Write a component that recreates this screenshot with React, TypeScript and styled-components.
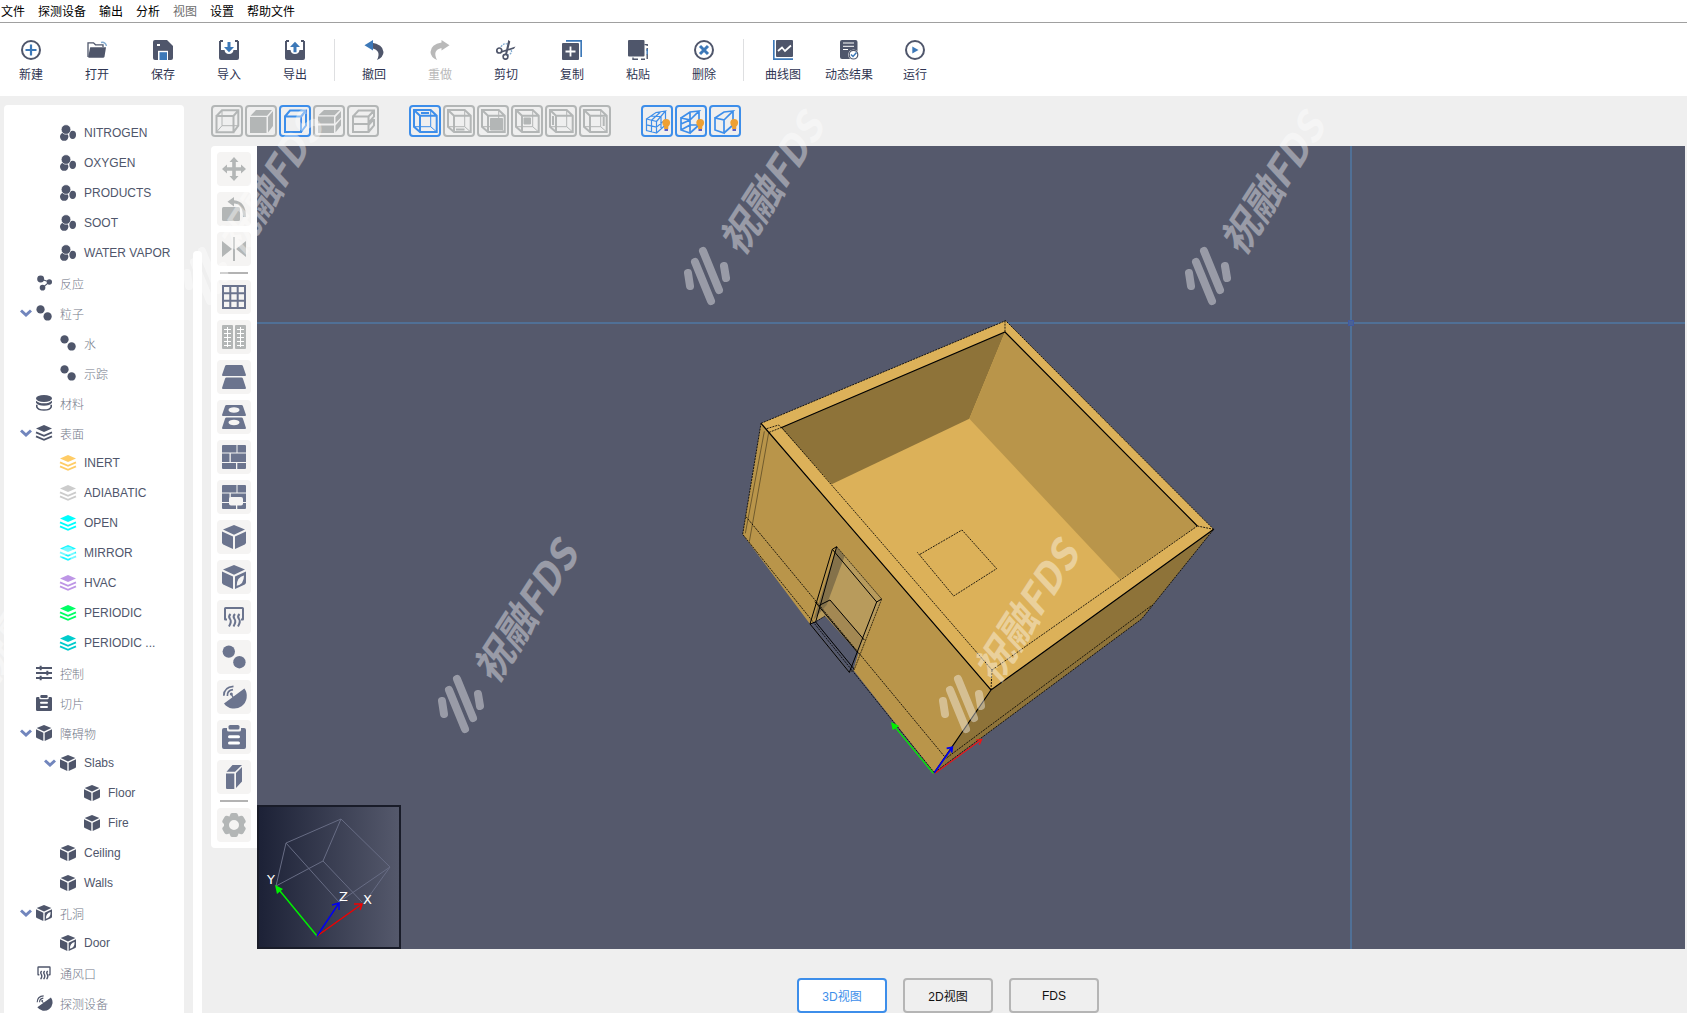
import React, { useState } from "react";
import styled, { createGlobalStyle, css } from "styled-components";

const SANS = `"Liberation Sans", "Noto Sans CJK SC", sans-serif`;
const INK = "#4f566b";
const BLUE = "#3c78b8";
const ACCENT = "#3d8eea";
const MUTED = "#b3b6b6";
const VIEW_BG = "#55596c";

const GlobalStyle = createGlobalStyle`
  * { box-sizing: border-box; }
  body { margin: 0; background: #efefef; font-family: ${SANS}; font-size: 12px; }
  button { margin: 0; padding: 0; border: 0; background: none; font: inherit; color: inherit; cursor: pointer; }
  button:disabled { cursor: default; }
  ul { margin: 0; padding: 0; list-style: none; }
  svg { display: block; flex: none; }
`;

const Page = styled.div`
  position: relative;
  display: flex;
  flex-direction: column;
  height: 100vh;
  overflow: hidden;
`;

const MenuBar = styled.nav`
  display: flex;
  gap: 13px;
  height: 23px;
  padding: 2px 0 0 1px;
  background: #fff;
  border-bottom: 1px solid #a0a0a0;
`;

const MenuItem = styled.button`
  color: #000;
  line-height: 20px;
  &:disabled { color: #6d6d6d; }
`;

const Toolbar = styled.header`
  display: flex;
  align-items: center;
  gap: 12px;
  height: 73px;
  padding-left: 4px;
  background: #fff;
`;

const ToolbarButton = styled.button`
  display: flex;
  flex-direction: column;
  align-items: center;
  gap: 6px;
  width: 54px;
  padding-top: 5px;
  color: #2f3552;
  line-height: 18px;
  white-space: nowrap;
  &:disabled { color: #b9b9b9; }
`;

const ToolbarRule = styled.span`
  width: 1px;
  height: 42px;
  background: #dedfe1;
`;

const Body = styled.div`
  display: flex;
  flex: 1;
  min-height: 0;
  padding: 9px 2px 0 4px;
`;

const TreePanel = styled.aside`
  width: 180px;
  padding-top: 13px;
  overflow: hidden;
  background: #fff;
  border-radius: 4px 4px 0 0;
`;

const TreeRow = styled.button<{ $level: number; $category: boolean }>`
  display: flex;
  align-items: center;
  width: 100%;
  height: 30px;
  padding-left: ${(p) => 16 + p.$level * 24}px;
  color: ${INK};
  white-space: nowrap;
  ${(p) => p.$category && css`color: #737989; font-weight: 300;`}
`;

const Twisty = styled.span`
  width: 16px;
  color: #7286bd;
`;

const TreeIcon = styled.span<{ $color: string }>`
  width: 24px;
  color: ${(p) => p.$color};
`;

const ScrollTrack = styled.div`
  width: 9px;
  margin: 146px 9px 0;
  background: #fff;
  border-radius: 4px 4px 0 0;
`;

const Main = styled.main`
  display: flex;
  flex: 1;
  flex-direction: column;
  min-width: 0;
`;

const ViewBar = styled.div`
  display: flex;
  gap: 30px;
  margin-bottom: 9px;
`;

const ViewGroup = styled.div`
  display: flex;
  gap: 2px;
`;

const ViewButton = styled.button<{ $active: boolean }>`
  display: grid;
  place-items: center;
  width: 32px;
  height: 32px;
  border: 2px solid ${(p) => (p.$active ? ACCENT : MUTED)};
  border-radius: 4px;
  color: ${(p) => (p.$active ? ACCENT : MUTED)};
`;

const Workspace = styled.div`
  display: flex;
  flex: 1;
  align-items: flex-start;
  min-height: 0;
`;

const ToolRail = styled.div`
  display: flex;
  flex-direction: column;
  align-items: center;
  gap: 6px;
  width: 46px;
  padding: 6px 0;
  background: #fff;
  border-radius: 4px 0 0 4px;
`;

const RailButton = styled.button`
  display: grid;
  place-items: center;
  width: 34px;
  height: 34px;
  border-radius: 4px;
  background: #f5f4f3;
  color: #6b748e;
  &:disabled { color: ${MUTED}; }
`;

const RailRule = styled.span`
  width: 28px;
  height: 2px;
  background: #b3b3b3;
`;

const Viewport = styled.section`
  position: relative;
  flex: 1;
  align-self: stretch;
  overflow: hidden;
  background: ${VIEW_BG};
`;

const NavCube = styled.div`
  position: absolute;
  left: 0;
  bottom: 0;
`;

const ModeBar = styled.footer`
  display: flex;
  justify-content: center;
  gap: 16px;
  padding-top: 29px;
`;

const ModeButton = styled.button<{ $active: boolean }>`
  width: 90px;
  height: 35px;
  border: 2px solid ${(p) => (p.$active ? ACCENT : "#b5b5b5")};
  border-radius: 4px;
  color: #111;
  ${(p) => p.$active && css`background: #fff; color: ${ACCENT};`}
`;

const WatermarkLayer = styled.div`
  position: absolute;
  inset: 0;
  overflow: hidden;
  pointer-events: none;
`;

/* ---------- icons, all on a 24 unit grid ---------- */

const cubeFaces = (
  <>
    <path d="M12 0 23 4.6 12 9.8 1 4.6Z" />
    <path d="M0 6.4 11 11.6V24L1.2 19.4Q0 18.8 0 17.5Z" />
  </>
);

const glyphs: Record<string, React.ReactNode> = {
  species: (
    <>
      <ellipse cx="6.3" cy="17.6" rx="6.3" ry="6.2" />
      <ellipse cx="19" cy="14.8" rx="5" ry="6.2" />
      <circle cx="9" cy="6.8" r="7.2" stroke="#fff" strokeWidth="1" />
    </>
  ),
  reaction: (
    <>
      <path d="M7 6 20 10.5 10 19" fill="none" stroke="currentColor" strokeWidth="1.6" />
      <circle cx="7" cy="6" r="5.2" /><circle cx="20" cy="10.5" r="4" /><circle cx="9.8" cy="19" r="4.2" />
    </>
  ),
  particle: <><circle cx="6.8" cy="6.6" r="6.2" /><circle cx="17.4" cy="17.2" r="6.2" /></>,
  material: (
    <>
      <ellipse cx="12" cy="5.2" rx="12" ry="5.2" />
      <path d="M0 8.6Q4 12.4 12 12.4T24 8.6V11.5Q21 16 12 16T0 11.5Z" />
      <path d="M1.2 14.5V18Q3 22.6 12 22.6T22.8 18V14.5" fill="none" stroke="currentColor" strokeWidth="2.4" />
    </>
  ),
  layers: (
    <>
      <path d="M12 0 24 5.2 12 10.4 0 5.2Z" />
      <path d="M0 11 12 16.2 24 11M0 17 12 22.2 24 17" fill="none" stroke="currentColor" strokeWidth="2.6" />
    </>
  ),
  control: (
    <path d="M0 4.5H24M0 12H24M0 19.5H24M7 1V8M17 8.5V15.5M7 16V23" fill="none" stroke="currentColor" strokeWidth="3" />
  ),
  clip: (
    <>
      <path d="M2 3H5V5Q5 6.5 7 6.5H17Q19 6.5 19 5V3H22Q24 3 24 5V22Q24 24 22 24H2Q0 24 0 22V5Q0 3 2 3Z" />
      <rect x="6.5" y="0" width="11" height="4.6" rx="1.6" />
      <path d="M7.5 11.8H16.5M7.5 18H16.5" stroke="#fff" strokeWidth="3" strokeLinecap="round" />
    </>
  ),
  cube: <>{cubeFaces}<path d="M13 11.6 24 6.4V17.5Q24 18.8 22.8 19.4L13 24Z" /></>,
  hole: (
    <>
      {cubeFaces}
      <path fillRule="evenodd" d="M13 11.6 24 6.4V17.5Q24 18.8 22.8 19.4L13 24ZM22 10.6Q15 12 14.7 20.8Q22 19.5 22 10.6Z" />
    </>
  ),
  vent: (
    <path d="M5 14.6H3.2Q3 14.6 3 14.2V3.6Q3 3 3.6 3H20.4Q21 3 21 3.6V14.2Q21 14.6 20.8 14.6H19M8.5 9Q6 11.5 8 14T7 21.4M13 9Q10.5 11.5 12.5 14T11.5 21.4M17.5 9Q15 11.5 17 14T16 21.4" fill="none" stroke="currentColor" strokeWidth="2" />
  ),
  dish: (
    <>
      <path d="M22.4 3.6A12 12 0 0 1 2 18.4Z" />
      <path d="M11.5 13 9.5 9.5" fill="none" stroke="currentColor" strokeWidth="1.5" />
      <circle cx="9.3" cy="9" r="1.5" />
      <path d="M5.4 11Q5 5.4 11 4.6M1.800 10.8Q1.8 2 11.5 1.3" fill="none" stroke="currentColor" strokeWidth="1.7" />
    </>
  ),
  move: (
    <path d="M12 0 16.5 5H13.8V10.2H19V7.5L24 12 19 16.5V13.8H13.8V19H16.5L12 24 7.5 19H10.2V13.8H5V16.5L0 12 5 7.5V10.2H10.2V5H7.5Z" />
  ),
  rotate: (
    <>
      <rect x="0" y="10" width="18" height="14" rx="1.5" />
      <path d="M5.5 4.8 12 0V3.2Q24 4.2 24 20H21Q21 7 12 6.4V9.5Z" />
    </>
  ),
  mirror: <path d="M0 4 10 12 0 20ZM24 4 14 12 24 20ZM11 0H13V24H11Z" />,
  grid: <path d="M1 1H23V23H1ZM8.3 1V23M15.7 1V23M1 8.3H23M1 15.7H23" fill="none" stroke="currentColor" strokeWidth="2" />,
  slices: (
    <>
      <rect width="11" height="24" rx="1" /><rect x="13" width="11" height="24" rx="1" />
      <path d="M5.5 2V22M18.5 2V22M2 4.5H9M2 8.5H9M2 12.5H9M2 16.5H9M2 20.5H9M15 4.5H22M15 8.5H22M15 12.5H22M15 16.5H22M15 20.5H22" stroke="#fff" strokeWidth="1" />
    </>
  ),
  slab: <path d="M4.500 0H19.500Q20.500 0 20.900 1L24 10Q24 11 23 11H1Q0 11 0 10L3.100 1Q3.500 0 4.500 0ZM4.500 12.500H19.500Q20.500 12.500 20.900 13.500L24 23Q24 24 23 24H1Q0 24 0 23L3.100 13.500Q3.500 12.500 4.500 12.500Z" />,
  slabHole: (
    <path fillRule="evenodd" d="M4.500 0H19.500Q20.500 0 20.900 1L24 10Q24 11 23 11H1Q0 11 0 10L3.100 1Q3.500 0 4.500 0ZM4.500 12.500H19.500Q20.500 12.500 20.900 13.500L24 23Q24 24 23 24H1Q0 24 0 23L3.100 13.500Q3.500 12.500 4.500 12.500ZM6.500 5A5.500 2.700 0 0 0 17.500 5A5.500 2.700 0 0 0 6.500 5ZM6.500 17.500A5.500 2.700 0 0 0 17.500 17.500A5.500 2.700 0 0 0 6.500 17.500Z" />
  ),
  wall: <path d="M0 1Q0 0 1 0H14.5V7.5H0ZM15.5 0H23Q24 0 24 1V7.5H15.5ZM0 8.5H7.5V17H0ZM8.8 8.5H24V17H8.8ZM0 18H14V24H1Q0 24 0 23ZM15.3 18H24V23Q24 24 23 24H15.3Z" />,
  wallHole: (
    <>
      <path d="M0 1Q0 0 1 0H14.5V7.5H0ZM15.5 0H23Q24 0 24 1V7.5H15.5ZM0 8.5H7.5V17H0ZM8.8 8.5H24V17H8.8ZM0 18H14V24H1Q0 24 0 23ZM15.3 18H24V23Q24 24 23 24H15.3Z" />
      <rect x="7" y="12" width="14" height="8.5" rx="2" fill="#f5f4f3" />
    </>
  ),
  column: <path d="M10.5 0H20L13 6.8H4.5ZM4 8.5H12.3V24H5Q4 24 4 23ZM14 8 20 2V16.5L14 23Z" />,
  gear: (
    <path fillRule="evenodd" d="M8 2Q8.5 0 10 0H14Q15.5 0 16 2L16.5 3.5 19 2.8Q20.5 2.5 21.5 4L23.5 7.5Q24.3 9 23 10L22 11V13L23 14Q24.3 15 23.5 16.5L21.5 20Q20.5 21.5 19 21.2L16.5 20.5 16 22Q15.5 24 14 24H10Q8.5 24 8 22L7.5 20.5 5 21.2Q3.5 21.5 2.5 20L.5 16.5Q-.3 15 1 14L2 13V11L1 10Q-.3 9 .5 7.5L2.5 4Q3.5 2.5 5 2.8L7.5 3.5ZM7 12A5 5 0 0 0 17 12A5 5 0 0 0 7 12Z" />
  ),
};

function Glyph({ name, size }: { name: string; size: number }) {
  return <svg width={size} height={size} viewBox="0 0 24 24" fill="currentColor" overflow="visible" aria-hidden="true">{glyphs[name]}</svg>;
}

/* ---------- main toolbar icons on a 20 unit grid ---------- */

const tray = (
  <>
    <path d="M1 1H4M16 1H19" stroke={INK} strokeWidth="2" />
    <path d="M0 1H2V10H5.5Q6 14 10 14T14.5 10H18V1H20V18Q20 20 18 20H2Q0 20 0 18Z" fill={INK} />
  </>
);

const actionGlyphs: Record<string, React.ReactNode> = {
  create: <><circle cx="10" cy="10" r="9" fill="none" stroke={INK} strokeWidth="2" /><path d="M10 4.5V15.5M4.5 10H15.5" stroke={BLUE} strokeWidth="2.2" /></>,
  open: (
    <>
      <path d="M1 17V2.8H6.5L8.5 4.8H16V7" fill="none" stroke={INK} strokeWidth="1.3" />
      <path d="M3.2 7.3H19L17.500 16.7Q17.2 17.7 16 17.7H2Q1 17.7 1.2 16.7Z" fill={INK} />
      <path d="M14 2.5Q18 1.5 19.5 6" fill="none" stroke="#83abd0" strokeWidth="1.4" />
    </>
  ),
  save: (
    <>
      <path d="M2 0H14L20 6V18Q20 20 18 20H2Q0 20 0 18V2Q0 0 2 0Z" fill={INK} />
      <path d="M4 5H7" stroke="#fff" strokeWidth="2" /><path d="M5 20V10.8H15V20Z" fill="#fff" /><path d="M6.5 12.2H14V20H6.5Z" fill={BLUE} />
    </>
  ),
  import: <>{tray}<path d="M8.5 2H11.5V7H15L10 12.3 5 7H8.5Z" fill={BLUE} /></>,
  export: <>{tray}<path d="M8.5 12.3H11.5V7H15L10 1.7 5 7H8.5Z" fill={BLUE} /></>,
  undo: <><path d="M7 2.5Q19 4 19.5 12 19.5 17 13 20 18 10 7 8Z" fill={INK} /><path d="M.5 5.3 9 0V10.6Z" fill={BLUE} /></>,
  redo: <path d="M19.5 5.3 11.5 0V2.5Q1 4 .5 12 .5 17 7 20 2 10 11.5 8V10.6Z" fill="#b9b9b9" />,
  cut: (
    <>
      <path d="M5 7Q7 3 12 4M15 10Q17 13 12 15" fill="none" stroke="#83abd0" strokeWidth="1.3" strokeDasharray="2 1" />
      <circle cx="3.3" cy="10.5" r="2.5" fill="none" stroke={INK} strokeWidth="1.7" /><circle cx="9.5" cy="16.8" r="2.4" fill="none" stroke={INK} strokeWidth="1.7" />
      <path d="M5.5 11 19.5 6.5 18 8.8 6 12.5ZM9 14.5 12.3 0 14.3 1.5 11 14.5Z" fill={INK} />
    </>
  ),
  copy: <><path d="M4 .8H19.2V17" fill="none" stroke={BLUE} strokeWidth="1.7" /><rect y="3" width="17" height="17" rx="1" fill={INK} /><path d="M8.5 6.5V16.5M3.5 11.5H13.5" stroke="#fff" strokeWidth="1.8" /></>,
  paste: (
    <>
      <path d="M5 17.5V19.2H10M13 19.2H17M19.2 19V14M19.2 11V8M16.5 4.6H19.2V6" fill="none" stroke={INK} strokeWidth="1.4" />
      <path d="M19.2 9V14.5" stroke={BLUE} strokeWidth="1.4" /><rect width="16.5" height="16.5" rx="1" fill={INK} />
    </>
  ),
  remove: <><circle cx="10" cy="10" r="9" fill="none" stroke={INK} strokeWidth="2" /><path d="M6 6 14 14M14 6 6 14" stroke={BLUE} strokeWidth="3" /></>,
  chart: <><path d="M.8 0V19.2H20" fill="none" stroke={BLUE} strokeWidth="1.7" /><rect x="3" width="17" height="17" rx="1" fill={INK} /><path d="M5 11 9 7.5 12 11 18 5.5" fill="none" stroke="#fff" strokeWidth="1.7" /></>,
  result: (
    <>
      <rect x="1" width="17.5" height="19" rx="2" fill={INK} /><path d="M4 3H15M4 6.3H15M4 9.5H9" stroke="#fff" strokeWidth="1" />
      <circle cx="14.5" cy="14.7" r="5.3" fill="#fff" /><circle cx="14.5" cy="14.7" r="4.3" fill="none" stroke={INK} strokeWidth="1.2" />
      <path d="M12 14.5 14 16.5 17.5 12.5" fill="none" stroke={BLUE} strokeWidth="1.5" />
    </>
  ),
  run: <><circle cx="10" cy="10" r="9" fill="none" stroke={INK} strokeWidth="2" /><path d="M7.3 6.5V13.5L13.5 10Z" fill={BLUE} /></>,
};

const actions: ([string, string] | null)[] = [
  ["create", "新建"], ["open", "打开"], ["save", "保存"], ["import", "导入"], ["export", "导出"], null,
  ["undo", "撤回"], ["redo", "重做"], ["cut", "剪切"], ["copy", "复制"], ["paste", "粘贴"], ["remove", "删除"], null,
  ["chart", "曲线图"], ["result", "动态结果"], ["run", "运行"],
];

/* ---------- view style icons ---------- */

const insideCube = (mark: React.ReactNode) => (
  <>
    <path d="M1 1H17.7L23.7 6.7V23H7L1 17.7ZM1 1 7 6.7H23.7M7 6.7V23" strokeWidth="2" />
    <path d="M17.7 1V17.7H1M17.7 17.7 23.7 23" strokeWidth="1" />
    {mark}
  </>
);

const bulb = (
  <>
    <path d="M17.3 13.8A3.9 3.9 0 1 1 25.1 13.8Q25.1 16 23.3 17.5V20H19.1V17.5Q17.3 16 17.3 13.8Z" fill="#eea033" stroke="none" />
    <path d="M19.5 21H23" stroke="#5b5fc7" strokeWidth="2" />
  </>
);

const obliqueCube = "M2 9 11 11V24L2 21ZM2 9 11 3 20 2 11 11M20 2V16L11 24";

const viewGlyphs: Record<string, React.ReactNode> = {
  线框: <><path d="M1.5 7H18.5V23.2H1.5ZM1.5 7 7 1.3H23.3V16.7L18.5 23.2M18.5 7 23.3 1.3" strokeWidth="2" /><path d="M7 2V16.7H23M7 16.7 1.5 23" strokeWidth="1" /></>,
  实体: <path d="M1 8H17.5V24H1ZM1.5 6.8 7 1H23L18 6.8ZM19 8 24 2V17L19 23.5Z" fill="currentColor" stroke="none" />,
  实体线框: <path d="M2 7.5H18V23H2ZM2 7.5 7 1.5H23V16.5L18 23M18 7.5 23 1.5" strokeWidth="2" />,
  分层实体: <path d="M1 7.5H17V14.5H1ZM1 16.5H17V24H1ZM1.5 6.3 7 1H23L17.5 6.3ZM18.5 8 24 2V8.5L18.5 14ZM18.5 16.5 24 10V16.5L18.5 23.5Z" fill="currentColor" stroke="none" />,
  分层线框: <path d="M2 7.5H17.5V23H2ZM2 15H17.5M2 7.5 7.5 1.5H23V7.5L17.5 14M17.5 7.5 23 1.5M23 10V16.5L17.5 23M17.5 16 23 10" strokeWidth="2" />,
  顶视图: insideCube(<path d="M8 4H16" strokeWidth="2" />),
  底视图: insideCube(<path d="M9 20.5H17.5" strokeWidth="2" />),
  前视图: insideCube(<path d="M9.5 9.5H21.5V21H9.5Z" fill="currentColor" strokeWidth="1" />),
  后视图: insideCube(<path d="M9 9H15.5V15H9Z" fill="currentColor" strokeWidth="1" />),
  左视图: insideCube(<path d="M4 7V16" strokeWidth="2" />),
  右视图: insideCube(<path d="M20.7 8V17" strokeWidth="2" />),
  显示网格: <><path d="M1.5 10 11.5 12.5V24L1.5 21.5ZM6.5 11.3V22.7M1.5 15.8 11.5 18.2 20 11M1.5 10 11 3.5 20.5 2 11.5 12.5M6 7 16 7.5M6.5 11.3 15.5 3M16 7V19M20.5 2V16L11.5 24" strokeWidth="1.2" />{bulb}</>,
  显示线框: <><path d={obliqueCube + "M11 3V16L2 21M11 16 20 16M2 15 11 11"} strokeWidth="1.7" />{bulb}</>,
  显示外形: <><path d={obliqueCube} strokeWidth="1.7" />{bulb}</>,
};

const viewGroups: string[][] = [
  ["线框", "实体", "实体线框", "分层实体", "分层线框"],
  ["顶视图", "底视图", "前视图", "后视图", "左视图", "右视图"],
  ["显示网格", "显示线框", "显示外形"],
];
const activeViews = ["实体线框", "顶视图", "显示网格", "显示线框", "显示外形"];

const railTools: ([string, string, boolean?] | null)[] = [
  ["move", "移动", true], ["rotate", "旋转", true], ["mirror", "镜像", true], null,
  ["grid", "网格"], ["slices", "网格切分", true], ["slab", "楼板"], ["slabHole", "楼板孔洞"], ["wall", "墙"],
  ["wallHole", "墙孔洞"], ["cube", "障碍物"], ["hole", "孔洞"], ["vent", "通风口"], ["particle", "粒子"],
  ["dish", "探测设备"], ["clip", "切片"], ["column", "柱"], null, ["gear", "设置", true],
];

interface Node { label: string; icon: string; level: number; open?: boolean; color?: string }

const tree: Node[] = [
  { label: "NITROGEN", icon: "species", level: 1 },
  { label: "OXYGEN", icon: "species", level: 1 },
  { label: "PRODUCTS", icon: "species", level: 1 },
  { label: "SOOT", icon: "species", level: 1 },
  { label: "WATER VAPOR", icon: "species", level: 1 },
  { label: "反应", icon: "reaction", level: 0 },
  { label: "粒子", icon: "particle", level: 0, open: true },
  { label: "水", icon: "particle", level: 1 },
  { label: "示踪", icon: "particle", level: 1 },
  { label: "材料", icon: "material", level: 0 },
  { label: "表面", icon: "layers", level: 0, open: true },
  { label: "INERT", icon: "layers", level: 1, color: "#ffcc66" },
  { label: "ADIABATIC", icon: "layers", level: 1, color: "#cccccc" },
  { label: "OPEN", icon: "layers", level: 1, color: "#00ffff" },
  { label: "MIRROR", icon: "layers", level: 1, color: "#1af8ff" },
  { label: "HVAC", icon: "layers", level: 1, color: "#be96e6" },
  { label: "PERIODIC", icon: "layers", level: 1, color: "#00ff66" },
  { label: "PERIODIC ...", icon: "layers", level: 1, color: "#00cccc" },
  { label: "控制", icon: "control", level: 0 },
  { label: "切片", icon: "clip", level: 0 },
  { label: "障碍物", icon: "cube", level: 0, open: true },
  { label: "Slabs", icon: "cube", level: 1, open: true },
  { label: "Floor", icon: "cube", level: 2 },
  { label: "Fire", icon: "cube", level: 2 },
  { label: "Ceiling", icon: "cube", level: 1 },
  { label: "Walls", icon: "cube", level: 1 },
  { label: "孔洞", icon: "hole", level: 0, open: true },
  { label: "Door", icon: "hole", level: 1 },
  { label: "通风口", icon: "vent", level: 0 },
  { label: "探测设备", icon: "dish", level: 0 },
];

function Scene() {
  return (
    <svg width="100%" height="100%" viewBox="257 146 1428 803" preserveAspectRatio="xMidYMid slice" role="img" aria-label="3D视图">
      <path d="M257 323H1685M1351 146V949" stroke="#507096" strokeWidth="2" />
      <rect x="1348.5" y="320.5" width="5" height="5" fill="#4a6297" stroke="#4059a0" />
      <g transform="translate(720 300) scale(.33333)" fill="none" stroke="#000" strokeWidth="2.5">
        <g stroke="none">
          <path fill="#dcb159" d="M857 62 1481 688 813 1170 123 370Z" />
          <path fill="#b9954a" d="M123 370 813 1170 643 1418 400 1110 388 1117 270 972 68 703Z" />
          <path fill="#8e7339" d="M813 1170 1481 688 1265 957 643 1418Z" />
          <path fill="#8e7339" d="M183 383 855 96 748 356 335 553Z" />
          <path fill="#b9954a" d="M855 96 1432 678 1200 838 748 356Z" />
          <path fill="#b89b5c" d="M350 740 485 897 415 1062 318 948 285 965Z" />
          <path fill="#a38853" d="M300 915 330 900 430 1015 415 1062 315 948Z" />
          <path fill="#85724a" d="M350 740 374 768 320 915 280 960Z" />
          <path fill={VIEW_BG} d="M270 972 315 948 415 1060 400 1110 388 1117Z" />
        </g>
        <path strokeDasharray="6 3" strokeWidth="2.5" d="M123 370 857 62 1481 688 1265 957 643 1418 68 703ZM816 1110 1432 678M816 1110 183 380M855 62V96M1432 678 1481 688M816 1110 813 1170M600 763 726 690 830 806 701 888 592 757M78 650 678 1375 1297 915M140 386 176 375 183 383 145 398" />
        <path strokeOpacity=".6" strokeWidth="2" d="M146 398 88 725M133 394 76 700" />
        <path strokeWidth="3.5" d="M123 370 813 1170 1481 688M813 1170 643 1418M183 383 855 96 1432 678" />
        <path strokeWidth="3" d="M337 748 470 906 388 1117 270 972ZM350 740 287 966 403 1108M337 748 350 740M470 906 485 897M270 972 287 966M285 905 415 1060M330 900 433 1020M300 915 330 900" />
        <path strokeWidth="2" strokeDasharray="6 2" d="M350 740 485 897 403 1108 388 1117M315 948 287 966" />
        <path stroke="#00f000" strokeWidth="4" d="M640 1420 524 1280" /><path fill="#00f000" stroke="none" d="M513 1266 538 1278 518 1290Z" />
        <path stroke="#f01414" strokeWidth="3.5" d="M645 1420 785 1318M768 1320 785 1318 778 1334" />
        <path stroke="#0000f0" strokeWidth="5" d="M643 1418 697 1342M680 1345 697 1342 695 1358" />
      </g>
    </svg>
  );
}

function AxisWidget() {
  return (
    <svg width="144" height="144" viewBox="0 0 144 144" role="img" aria-label="坐标轴">
      <defs><linearGradient id="dusk"><stop offset="0" stopColor="#1c2136" /><stop offset="1" stopColor={VIEW_BG} /></linearGradient></defs>
      <rect x="1" y="1" width="142" height="142" fill="url(#dusk)" stroke="#191c29" strokeWidth="2" />
      <path d="M19 81 29 38 84 14 133 62 108 97M82 97 133 62M66 56 84 14M29 38 82 97M19 81 66 56 105 97" fill="none" stroke="#676c84" />
      <path d="M60 131 23 86" stroke="#00f000" strokeWidth="1.5" /><path d="M18 80 26 84 20 89Z" fill="#00f000" />
      <path d="M60 131 105 99M97 99 105 99 103 105" fill="none" stroke="#f00000" strokeWidth="1.5" />
      <path d="M60 131 82 98M75 100 82 98 82 105" fill="none" stroke="#0000f0" strokeWidth="1.5" />
      <g fill="#fff" fontFamily="DejaVu Sans, sans-serif" fontSize="13">
        <text x="10" y="79">Y</text><text x="82" y="96">Z</text><text x="106" y="99">X</text>
      </g>
    </svg>
  );
}

const watermarkSpots = [[-501, 0], [0, 0], [501, 0], [-747, 428], [-246, 428], [255, 428]];

function Watermarks() {
  return (
    <WatermarkLayer aria-hidden="true">
      <svg width="1687" height="1013">
        {watermarkSpots.map(([x, y]) => (
          <g key={`${x},${y}`} transform={`translate(${x} ${y})`} opacity=".4">
            <path d="M688 273 690 286M695 262 711 301M703 251 719 290M724 266 726 278" fill="none" stroke="#fff" strokeWidth="8" strokeLinecap="round" />
            <text transform="translate(741 258) rotate(-57)" fill="#fff" fontSize="40" fontWeight="700" fontStyle="italic" fontFamily="Noto Sans CJK SC, sans-serif">祝融FDS</text>
          </g>
        ))}
      </svg>
    </WatermarkLayer>
  );
}

export default function App() {
  const [mode, setMode] = useState("3D视图");
  return (
    <Page>
      <GlobalStyle />
      <MenuBar>
        {["文件", "探测设备", "输出", "分析", "视图", "设置", "帮助文件"].map((m) => <MenuItem key={m} disabled={m === "视图"}>{m}</MenuItem>)}
      </MenuBar>
      <Toolbar>
        {actions.map((a, i) => a ? (
          <ToolbarButton key={a[0]} disabled={a[0] === "redo"}>
            <svg width="20" height="20" viewBox="0 0 20 20" aria-hidden="true">{actionGlyphs[a[0]]}</svg>
            {a[1]}
          </ToolbarButton>
        ) : <ToolbarRule key={i} />)}
      </Toolbar>
      <Body>
        <TreePanel>
          <ul>
            {tree.map((n) => (
              <li key={n.label}>
                <TreeRow $level={n.level} $category={/[^\x00-\x7f]/.test(n.label)} aria-expanded={n.open}>
                  <Twisty>
                    {n.open && <svg width="12" height="8" viewBox="0 0 12 8" aria-hidden="true"><path d="M1 1.5 6 6 11 1.5" fill="none" stroke="currentColor" strokeWidth="3" /></svg>}
                  </Twisty>
                  <TreeIcon $color={n.color ?? INK}><Glyph name={n.icon} size={16} /></TreeIcon>
                  {n.label}
                </TreeRow>
              </li>
            ))}
          </ul>
        </TreePanel>
        <ScrollTrack />
        <Main>
          <ViewBar>
            {viewGroups.map((group) => (
              <ViewGroup key={group[0]}>
                {group.map((v) => (
                  <ViewButton key={v} $active={activeViews.includes(v)} aria-label={v} aria-pressed={activeViews.includes(v)}>
                    <svg width="24" height="24" viewBox="0 0 24 24" fill="none" stroke="currentColor" overflow="visible" aria-hidden="true">{viewGlyphs[v]}</svg>
                  </ViewButton>
                ))}
              </ViewGroup>
            ))}
          </ViewBar>
          <Workspace>
            <ToolRail>
              {railTools.map((t, i) => t
                ? <RailButton key={t[0]} aria-label={t[1]} disabled={t[2]}><Glyph name={t[0]} size={24} /></RailButton>
                : <RailRule key={i} />)}
            </ToolRail>
            <Viewport>
              <Scene />
              <NavCube><AxisWidget /></NavCube>
            </Viewport>
          </Workspace>
          <ModeBar>
            {["3D视图", "2D视图", "FDS"].map((m) => <ModeButton key={m} $active={m === mode} onClick={() => setMode(m)}>{m}</ModeButton>)}
          </ModeBar>
        </Main>
      </Body>
      <Watermarks />
    </Page>
  );
}
